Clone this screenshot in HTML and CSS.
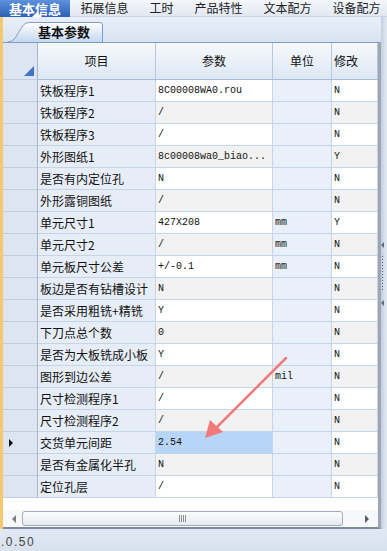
FILE: index.html
```html
<!DOCTYPE html>
<html lang="zh">
<head>
    <meta charset="UTF-8">
    <meta name="viewport" content="width=device-width, initial-scale=1.0">
    <title>基本信息</title>
    <link rel="stylesheet" href="styles.css">
</head>
<body>
    <div class="topbar">
        <div class="tab active">基本信息</div>
        <div class="tab">拓展信息</div>
        <div class="tab">工时</div>
        <div class="tab">产品特性</div>
        <div class="tab">文本配方</div>
        <div class="tab">设备配方</div>
    </div>

    <div class="main">
        <div class="panel">
            <div class="subtabs">
                <div class="subtab">
                    <svg class="subtab-bg" width="97" height="21" viewBox="0 0 97 21">
                        <defs>
                            <linearGradient id="tabg" x1="0" y1="0" x2="0" y2="1">
                                <stop offset="0" stop-color="#ffffff"/>
                                <stop offset="1" stop-color="#c4d7f0"/>
                            </linearGradient>
                        </defs>
                        <path d="M0.5 21 C8 21 10 13 15 6 C17 3 19 1.5 23 1.5 L93 1.5 Q95.5 1.5 95.5 4 L95.5 21" fill="url(#tabg)" stroke="#7f9cc6"/>
                    </svg>
                    <span>基本参数</span>
                </div>
            </div>

            <div class="grid">
                <div class="row head">
                    <div class="cell rh corner"></div>
                    <div class="cell">项目</div>
                    <div class="cell">参数</div>
                    <div class="cell">单位</div>
                    <div class="cell left">修改</div>
                </div>
                <div id="rows"></div>
                <div class="filler"></div>
                <div class="hscroll">
                    <div class="arrow-left"></div>
                    <div class="thumb"><span class="grip"></span></div>
                    <div class="arrow-right"></div>
                </div>
            </div>
        </div>
        <div class="splitter">
            <span class="tri"></span>
            <span class="dots"></span>
            <span class="tri"></span>
        </div>
    </div>

    <div class="status">.0.50</div>

    <svg class="pointer" width="387" height="551" viewBox="0 0 387 551">
        <line x1="286" y1="358" x2="214" y2="430" stroke="#f07a7a" stroke-width="2.5" stroke-linecap="round"/>
        <polygon points="205,438 210,420 223,432" fill="#f07a7a"/>
    </svg>

    <script>
        const data = [
            ['铁板程序1', '8C00008WA0.rou', '', 'N'],
            ['铁板程序2', '/', '', 'N'],
            ['铁板程序3', '/', '', 'N'],
            ['外形图纸1', '8c00008wa0_biao...', '', 'Y'],
            ['是否有内定位孔', 'N', '', 'N'],
            ['外形露铜图纸', '/', '', 'N'],
            ['单元尺寸1', '427X208', 'mm', 'Y'],
            ['单元尺寸2', '/', 'mm', 'N'],
            ['单元板尺寸公差', '+/-0.1', 'mm', 'N'],
            ['板边是否有钻槽设计', 'N', '', 'N'],
            ['是否采用粗铣+精铣', 'Y', '', 'N'],
            ['下刀点总个数', '0', '', 'N'],
            ['是否为大板铣成小板', 'Y', '', 'N'],
            ['图形到边公差', '/', 'mil', 'N'],
            ['尺寸检测程序1', '/', '', 'N'],
            ['尺寸检测程序2', '/', '', 'N'],
            ['交货单元间距', '2.54', '', 'N'],
            ['是否有金属化半孔', 'N', '', 'N'],
            ['定位孔层', '/', '', 'N']
        ];
        const current = 16;

        const rows = document.getElementById('rows');
        data.forEach((item, index) => {
            const row = document.createElement('div');
            row.className = 'row' + (index % 2 ? ' alt' : '') + (index === current ? ' current' : '');
            row.innerHTML = `
                <div class="cell rh">${index === current ? '<span class="marker"></span>' : ''}</div>
                <div class="cell name">${item[0]}</div>
                <div class="cell val">${item[1]}</div>
                <div class="cell unit">${item[2]}</div>
                <div class="cell val">${item[3]}</div>
            `;
            rows.appendChild(row);
        });
    </script>
</body>
</html>
```

FILE: styles.css
```css
* {
    margin: 0;
    padding: 0;
    box-sizing: border-box;
}

body {
    width: 387px;
    height: 551px;
    overflow: hidden;
    position: relative;
    background: #dbe5f2;
    font-family: "Noto Sans CJK SC", "Liberation Sans", sans-serif;
    font-size: 12px;
    color: #111;
}

.topbar {
    height: 17px;
    display: flex;
    background: linear-gradient(#f4f7fb, #e1e8f2);
    border-bottom: 1px solid #cad4e2;
}

.tab {
    flex-shrink: 0;
    padding: 0 10.5px;
    line-height: 16px;
    font-size: 12px;
    color: #222;
    white-space: nowrap;
}

.tab.active {
    position: relative;
    width: 70px;
    height: 17px;
    padding: 0;
    text-align: center;
    font-size: 13px;
    line-height: 17px;
    font-weight: bold;
    color: #fff;
    background: linear-gradient(#5d92dc, #2d60b6);
}

.tab.active::after {
    content: "";
    position: absolute;
    left: 32px;
    bottom: 0;
    border-left: 5px solid transparent;
    border-right: 5px solid transparent;
    border-bottom: 5px solid #fff;
}

.main {
    display: flex;
    height: 512px;
}

.panel {
    width: 381px;
    border-left: 3px solid #f4c86c;
    display: flex;
    flex-direction: column;
}

.subtabs {
    height: 25px;
    padding: 4px 0 0 4px;
    background: linear-gradient(#e9eff8, #d8e3f2);
}

.subtab {
    position: relative;
    width: 97px;
    height: 21px;
}

.subtab-bg {
    position: absolute;
    left: 0;
    top: 0;
}

.subtab span {
    position: relative;
    display: block;
    padding-left: 31px;
    line-height: 22px;
    font-size: 13px;
    font-weight: bold;
    color: #111;
}

.grid {
    flex: 1;
    display: flex;
    flex-direction: column;
    background: #fff;
    border-top: 1px solid #7f9cc6;
    border-right: 3px solid #9da6b2;
    border-bottom: 2px solid #7c889b;
}

.row {
    display: grid;
    grid-template-columns: 35px 118px 117px 59px 46px;
    height: 22px;
}

.cell {
    border-right: 1px solid #c6d4e8;
    border-bottom: 1px solid #c6d4e8;
    padding-left: 2px;
    line-height: 21px;
    white-space: nowrap;
    overflow: hidden;
    color: #111;
}

.row.head {
    height: 37px;
}

.head .cell {
    background: linear-gradient(#f6f9fc, #dde7f3);
    border-right-color: #b6c7de;
    border-bottom-color: #a7bad5;
    text-align: center;
    line-height: 36px;
    padding: 0;
}

.head .cell.left {
    text-align: left;
    padding-left: 2px;
}

.head .corner {
    position: relative;
}

.head .corner::after {
    content: "";
    position: absolute;
    right: 3px;
    bottom: 3px;
    border-left: 10px solid transparent;
    border-bottom: 10px solid #3f73c4;
}

.cell.rh {
    position: relative;
    background: #dce5f1;
    border-right-color: #a5b6ce;
    border-bottom-color: #c0cee2;
}

.cell.name {
    background: #e6edf7;
}

.cell.val {
    font-family: "Liberation Mono", monospace;
    font-size: 10px;
    background: #fff;
}

.cell.unit {
    font-family: "Liberation Mono", monospace;
    font-size: 10px;
    color: #111;
    background: #e9f0fa;
}

.row.alt .cell.val {
    background: #f2f2f2;
}

.row.current .cell.val:nth-child(3) {
    background: #b7d5f6;
}

.marker {
    position: absolute;
    left: 6px;
    top: 7px;
    border-top: 4px solid transparent;
    border-bottom: 4px solid transparent;
    border-left: 4px solid #111;
}

.filler {
    height: 12px;
}

.hscroll {
    height: 17px;
    display: flex;
    align-items: center;
    background: #f7f8fa;
}

.arrow-left {
    width: 19px;
    display: flex;
    justify-content: center;
}

.arrow-left::before {
    content: "";
    margin-left: 2px;
    border-top: 4px solid transparent;
    border-bottom: 4px solid transparent;
    border-right: 4px solid #7a7f88;
}

.thumb {
    width: 321px;
    height: 15px;
    display: flex;
    justify-content: center;
    align-items: center;
    border: 1px solid #a3abb7;
    border-radius: 3px;
    background: linear-gradient(#fdfdfe, #e5e9ef);
}

.grip {
    width: 7px;
    height: 7px;
    background: repeating-linear-gradient(90deg, #8a8f98 0 1px, transparent 1px 2px);
}

.arrow-right {
    flex: 1;
    display: flex;
    justify-content: center;
}

.arrow-right::before {
    content: "";
    margin-left: 12px;
    border-top: 4px solid transparent;
    border-bottom: 4px solid transparent;
    border-left: 4px solid #555a62;
}

.splitter {
    flex: 1;
    display: flex;
    flex-direction: column;
    align-items: flex-start;
    padding-top: 225px;
    background: linear-gradient(90deg, #c3cfdf, #e4ebf5);
}

.splitter .tri {
    border-top: 3px solid transparent;
    border-bottom: 3px solid transparent;
    border-right: 3px solid #5b6b84;
}

.splitter .dots {
    width: 1px;
    height: 36px;
    margin: 8px 0 8px 1px;
    background: repeating-linear-gradient(#4f5e76 0 1px, transparent 1px 3px);
}

.status {
    height: 22px;
    padding-left: 1px;
    line-height: 26px;
    font-family: "Liberation Sans", sans-serif;
    font-size: 12px;
    letter-spacing: 1.5px;
    color: #444;
    background: linear-gradient(#e1e9f4, #d7e1ee);
}

.pointer {
    position: absolute;
    left: 0;
    top: 0;
    pointer-events: none;
}
```
